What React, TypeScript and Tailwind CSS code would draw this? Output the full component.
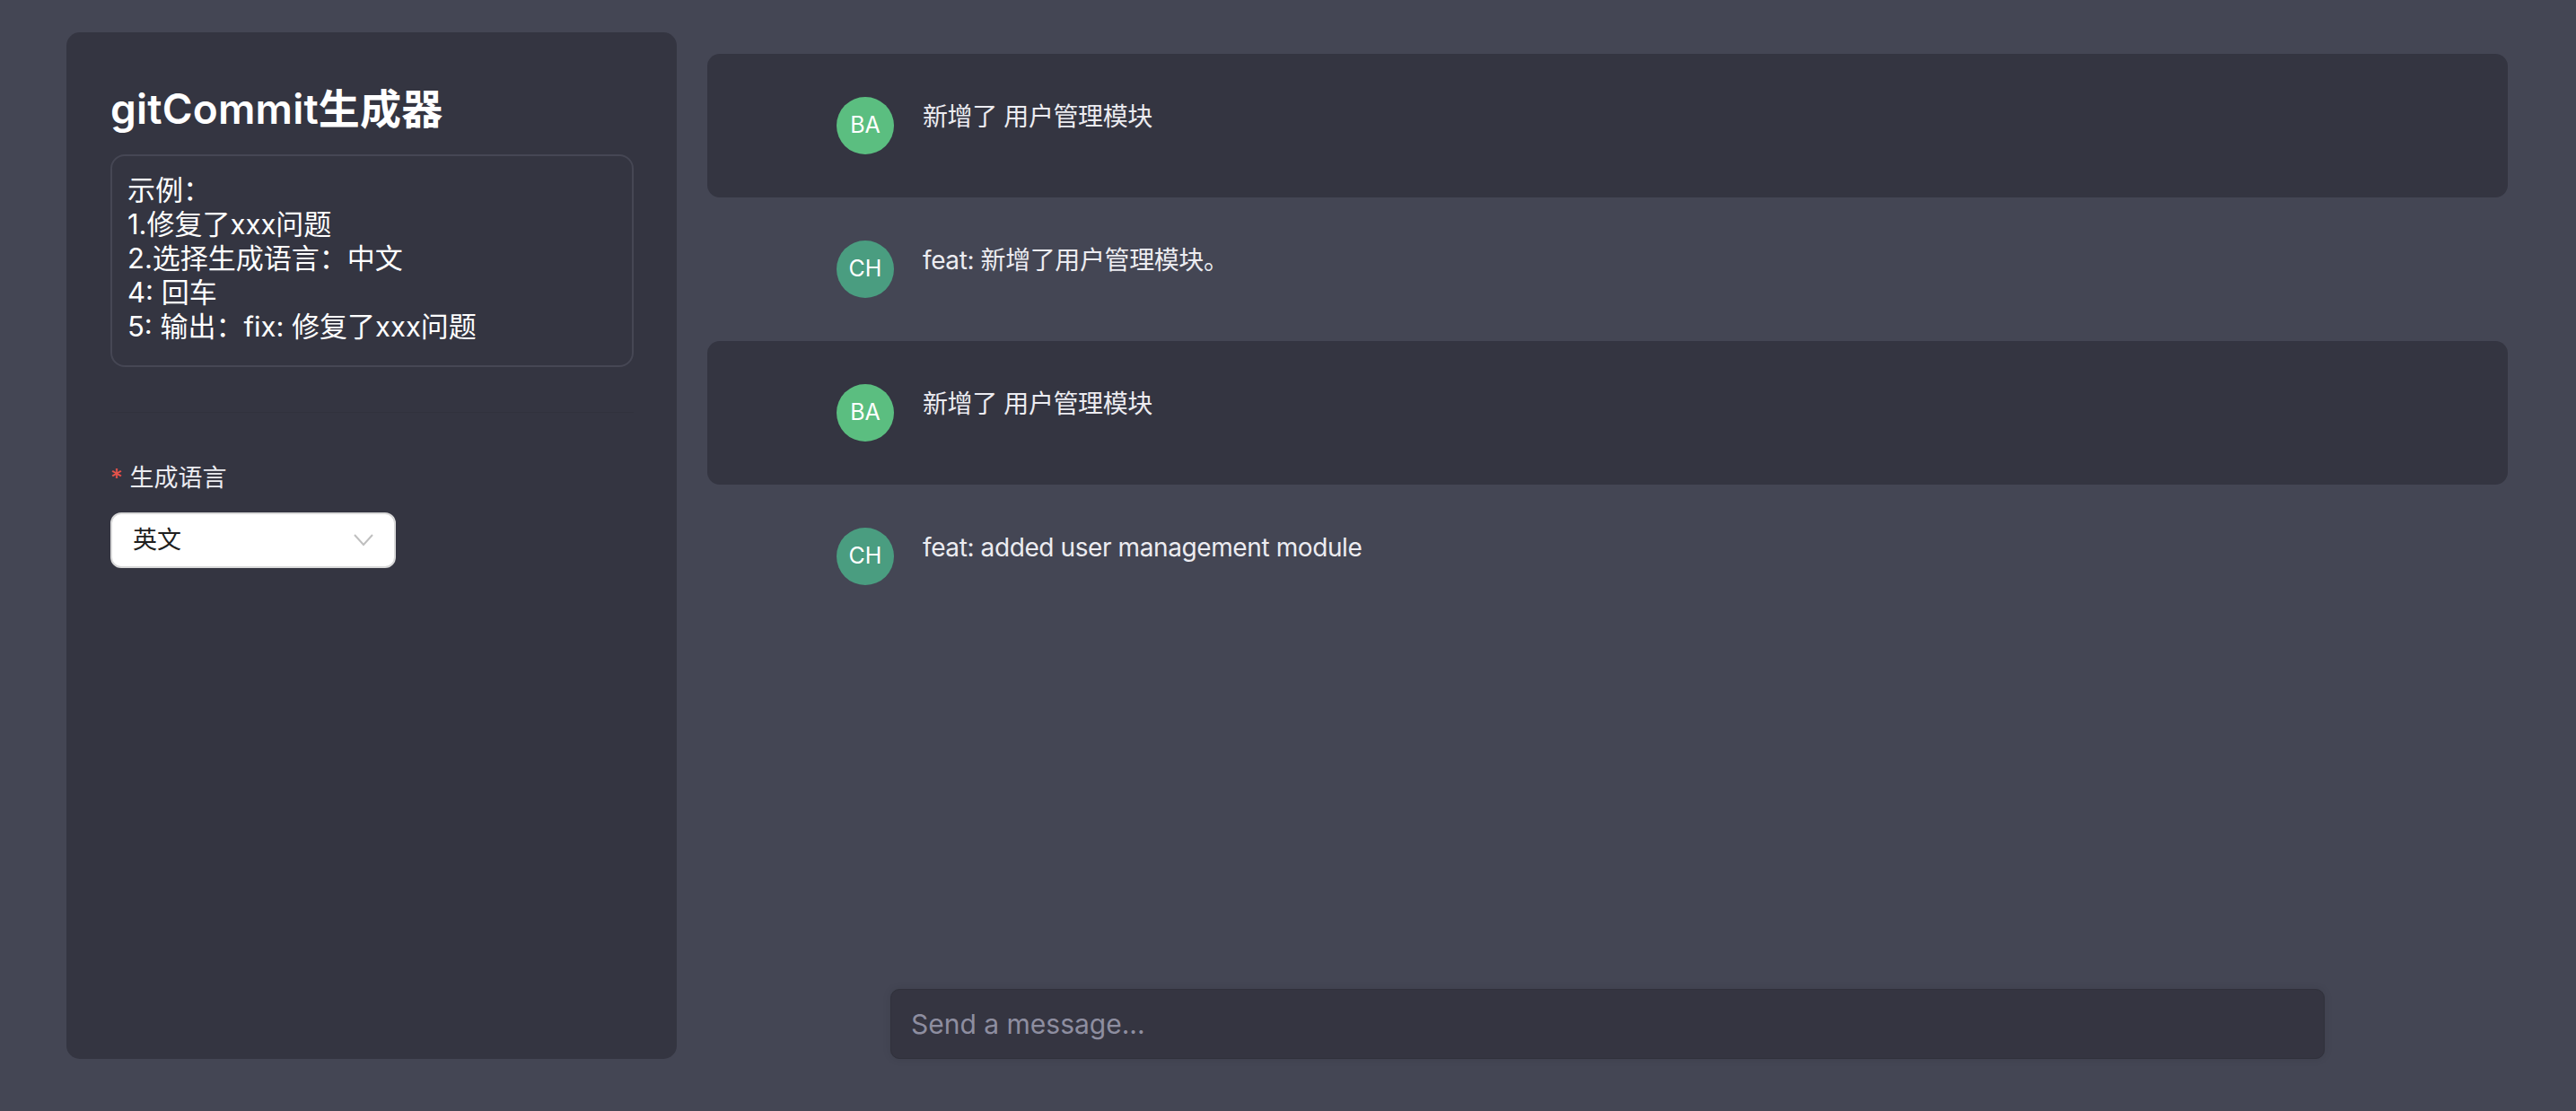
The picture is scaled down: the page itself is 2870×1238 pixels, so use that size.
import { useState } from 'react';

type message = {
  role: 'user' | 'assistant';
  text: string;
};

const messages: message[] = [
  { role: 'user', text: '新增了 用户管理模块' },
  { role: 'assistant', text: 'feat: 新增了用户管理模块。' },
  { role: 'user', text: '新增了 用户管理模块' },
  { role: 'assistant', text: 'feat: added user management module' },
];

const example = `示例：
1.修复了xxx问题
2.选择生成语言：中文
4: 回车
5: 输出：fix: 修复了xxx问题`;

function Avatar({ role }: { role: message['role'] }) {
  const isUser = role === 'user';
  return (
    <div
      className={`flex h-[64px] w-[64px] shrink-0 items-center justify-center rounded-full text-[25px] text-white ${
        isUser ? 'bg-[#5bbe80]' : 'bg-[#4a9d80]'
      }`}
    >
      {isUser ? 'BA' : 'CH'}
    </div>
  );
}

function Sidebar() {
  const [lang] = useState('英文');

  return (
    <aside className="flex h-[1144px] w-[680px] shrink-0 flex-col rounded-[15px] bg-[#343541] px-[49px] pt-[57px]">
      <h1 className="text-[46px] leading-[56px] font-semibold tracking-[0.2px] text-white">gitCommit生成器</h1>
      <textarea
        readOnly
        value={example}
        className="mt-[23px] h-[237px] w-[583px] resize-none rounded-[16px] border-2 border-[#464754] bg-transparent px-[17px] pt-[19px] text-[31px] leading-[38px] text-white outline-none"
      />
      <div className="mt-[50px] h-px w-[583px] bg-[#30313c]" />
      <label className="mt-[53px] flex items-center gap-[8px] text-[27px] leading-[40px] text-[#ececf1]">
        <span className="text-[#e5534b]">*</span>
        生成语言
      </label>
      <button className="mt-[18px] flex h-[62px] w-[318px] items-center justify-between rounded-[12px] border-2 border-[#d9d9d9] bg-white px-[23px] text-[27px] text-[#1f1f1f]">
        {lang}
        <svg width="22" height="14" viewBox="0 0 22 14" fill="none">
          <polyline points="1,1 11,12 21,1" stroke="#bfbfbf" strokeWidth="2" />
        </svg>
      </button>
    </aside>
  );
}

export default function App() {
  return (
    <div className="flex min-h-[1238px] w-full gap-[34px] bg-[#444654] pt-[36px] pr-[76px] pl-[74px] font-[Inter,'Noto_Sans_CJK_SC',sans-serif]">
      <Sidebar />
      <main className="flex h-[1144px] flex-1 flex-col">
        <div className="mt-[24px] flex flex-col">
          {messages.map((msg, index) => (
            <div
              key={index}
              className={`h-[160px] rounded-[14px] ${msg.role === 'user' ? 'bg-[#343541]' : ''}`}
            >
              <div className="mx-auto flex w-[1718px] items-start gap-[32px] pt-[48px]">
                <Avatar role={msg.role} />
                <p className="text-[28px] leading-[44px] tracking-[-0.4px] text-[#ececf1]">{msg.text}</p>
              </div>
            </div>
          ))}
        </div>
        <div className="mx-auto mt-auto w-[1598px]">
          <input
            placeholder="Send a message..."
            className="h-[78px] w-full rounded-[10px] border border-[#30313b] bg-[#353541] px-[22px] text-[30px] text-white shadow-[0_0_10px_rgba(0,0,0,0.1)] outline-none placeholder:text-[#8e8ea0]"
          />
        </div>
      </main>
    </div>
  );
}
